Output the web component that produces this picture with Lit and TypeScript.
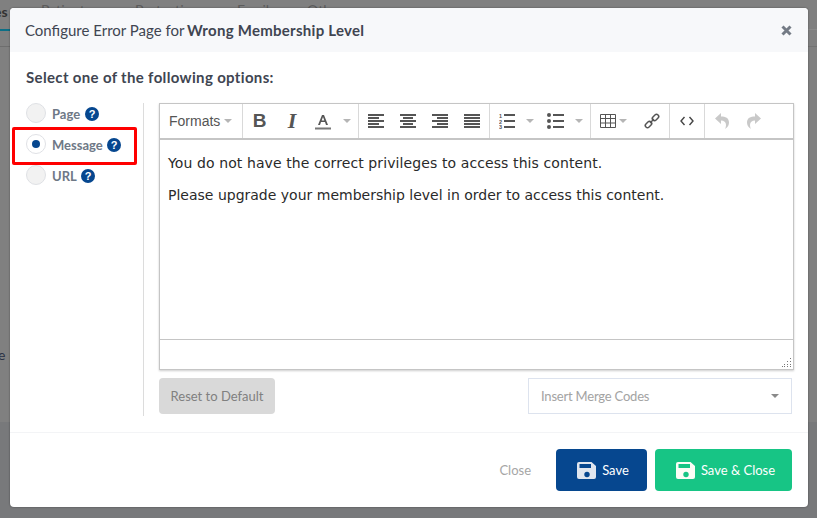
import { LitElement, html, css, svg } from "lit";
import { customElement } from "lit/decorators.js";

const help = html`<svg class="help" viewBox="0 0 14 14" width="14" height="14"><circle cx="7" cy="7" r="7" fill="#06478f"/><text x="7" y="11" text-anchor="middle" font-family="Liberation Sans" font-weight="700" font-size="11" fill="#fff">?</text></svg>`;
const caret = html`<span class="caret"></span>`;
const alignIcon = (lines: [number, number][]) => html`<svg width="16" height="14" viewBox="0 0 16 14">${lines.map(([x, w], i) => svg`<rect x="${x}" y="${i * 3}" width="${w}" height="2" fill="#555"/>`)}</svg>`;
const floppy = (fg: string, hole: string) => html`<svg width="19" height="17" viewBox="0 0 19 17"><path d="M2 0h12.500L19 4V15a2 2 0 0 1-2 2H2a2 2 0 0 1-2-2V2a2 2 0 0 1 2-2z" fill="${fg}"/><rect x="2.500" y="2" width="11.500" height="4" fill="${hole}"/><circle cx="10" cy="12.500" r="2.700" fill="${hole}"/></svg>`;

@customElement("app-root")
export class AppRoot extends LitElement {
  static styles = css`
    :host { display: block; width: 817px; height: 518px; position: relative; overflow: hidden; background: #7f7f7f; font-family: "Lato", sans-serif; color: #404551; }
    .backdrop { position: absolute; inset: 0; display: flex; flex-direction: column; background: #808080; }
    .bg-top { height: 422px; background: #808080; position: relative; }
    .bg-bottom { flex: 1; background: #78797b; }
    .bgtext { position: absolute; font-size: 14px; line-height: 18px; color: #5c5c5c; white-space: nowrap; }
    .t1 { left: -6px; top: 3px; font-weight: 700; color: #333; }
    .t2 { left: 41px; top: 1px; } .t3 { left: 135px; top: 1px; } .t4 { left: 237px; top: 1px; } .t5 { left: 307px; top: 1px; }
    .t6 { left: -2px; top: 346px; color: #2b3245; word-spacing: .5px; }
    .tabline { position: absolute; left: 0; top: 29px; width: 10px; height: 2px; background: #0c6f86; }
    .rule { position: absolute; left: 0; top: 46px; width: 10px; height: 1px; background: #6e6e6e; }
    .bar-r { position: absolute; right: 0; top: 29px; width: 9px; height: 18px; border-top: 1px solid #8a8a8a; border-bottom: 1px solid #737373; box-sizing: border-box; }
    .modal { position: absolute; left: 10px; top: 8px; width: 798px; height: 499px; background: #fff; border-radius: 4px; display: flex; flex-direction: column; box-shadow: 0 0 2px rgba(0,0,0,.45); }
    .head { height: 44px; background: #f7f8fa; border-radius: 4px 4px 0 0; display: flex; align-items: center; justify-content: space-between; padding: 0 16px 0 15px; font-size: 15px; flex: none; }
    .head b { font-weight: 700; letter-spacing: .27px; margin-left: -1px; }
    .body { flex: 1; padding: 14px 16px 0 16px; display: flex; flex-direction: column; border-bottom: 1px solid #f3f4f6; }
    .lead { font-size: 15px; font-weight: 700; line-height: 22px; margin-bottom: 15px; letter-spacing: .34px; }
    .cols { display: flex; }
    .opts { width: 118px; border-right: 1px solid #dcdcdc; height: 313px; flex: none; display: flex; flex-direction: column; gap: 9px; box-sizing: border-box; }
    .opt { height: 22px; display: flex; align-items: center; gap: 6px; font-size: 13px; font-weight: 700; color: #6e7886; position: relative; }
    .radio { width: 20px; height: 20px; border: 1px solid #dfe1e5; border-radius: 50%; background: #f2f2f2; box-sizing: border-box; display: flex; align-items: center; justify-content: center; margin-bottom: 2px; flex: none; }
    .radio.on { background: #fff; }
    .radio.on::after { content: ""; width: 8px; height: 8px; border-radius: 50%; background: #06478f; }
    .help { flex: none; margin-left: -2px; }
    .opt:first-child .help { margin-left: -1px; }
    .mark { position: absolute; left: -14px; top: -7px; width: 125px; height: 38px; border: 3px solid #f00; border-radius: 2px; box-sizing: border-box; pointer-events: none; }
    .main { margin-left: 15px; width: 635px; flex: none; }
    .editor { border: 1px solid #c5c5c5; box-shadow: 0 1px 2px rgba(0,0,0,.2); box-sizing: border-box; height: 267px; display: flex; flex-direction: column; }
    .tb { height: 34px; border-bottom: 2px solid #c5c5c5; box-sizing: content-box; display: flex; flex: none; background: #fff; }
    .grp { display: flex; align-items: center; border-right: 1px solid #d9d9d9; height: 100%; box-sizing: border-box; flex: none; }
    .grp:last-child { border-right: 0; }
    .formats { width: 83px; padding-left: 9px; font: 14px "Liberation Sans", sans-serif; color: #555; gap: 4px; }
    .btn { display: flex; align-items: center; justify-content: center; flex: none; height: 100%; }
    .caret { width: 0; height: 0; border-left: 4px solid transparent; border-right: 4px solid transparent; border-top: 4px solid #b5b5b5; flex: none; }
    .bold { font: 700 19px "Liberation Sans", sans-serif; color: #555; }
    .ital { font: italic 700 22px "Liberation Serif", serif; color: #555; }
    .content { flex: 1; padding: 14px 8px 0; font: 14px/19px "DejaVu Sans", sans-serif; color: #2a2a2a; }
    .content p { margin: 0 0 13px; }
    .p1 { letter-spacing: 0.1px; }
    .status { height: 29px; border-top: 1px solid #c5c5c5; flex: none; position: relative; }
    .grip { position: absolute; right: 1px; bottom: 1px; }
    .under { display: flex; justify-content: space-between; margin-top: 8px; padding-right: 2px; }
    .reset { width: 116px; height: 36px; background: #d9d9d9; border-radius: 4px; color: #808080; font-size: 13px; display: flex; align-items: center; justify-content: center; padding-bottom: 1px; box-sizing: border-box; }
    .merge { width: 264px; height: 36px; border: 1px solid #dde3ee; box-sizing: border-box; display: flex; align-items: center; justify-content: space-between; padding: 0 12px 1px; color: #a3a3a3; font-size: 13px; letter-spacing: -.2px; }
    .merge .caret { border-top-color: #8a8a8a; }
    .foot { height: 74px; flex: none; display: flex; align-items: center; justify-content: flex-end; padding: 0 16px 0 0; gap: 8px; font-size: 13px; }
    .close { color: #a6a6a6; margin-right: 17px; }
    .b { height: 42px; border-radius: 4px; color: #fff; display: flex; align-items: center; justify-content: center; gap: 6px; box-sizing: border-box; }
    .save { width: 91px; background: #06478f; padding-left: 3px; }
    .sc { width: 137px; background: #17c585; padding-left: 4px; }
    .m-a { margin-left: 11px; } .m-b { margin-left: 13px; } .m-c { margin-left: 3px; } .m-d { margin-left: 17px; } .m-e { margin-left: 5px; }
    .w-a { width: 116px; } .w-b { width: 131px; padding-left: 9px; gap: 16px; } .w-c { width: 101px; padding-left: 9px; }
    .w-d { width: 79px; padding-left: 9px; } .w-e { width: 35px; justify-content: center; } .w-f { padding-left: 10px; gap: 18px; }
  `;
  render() {
    const bar = (w: number, c: any) => html`<div class="btn" style="width:${w}px">${c}</div>`;
    const num = (y: number, t: string) => svg`<text x="0" y="${y}" font-size="5.500" font-family="Liberation Sans" fill="#555" font-weight="700">${t}</text>`;
    return html`
      <div class="backdrop">
        <div class="bg-top">
          <span class="bgtext t1">es</span><span class="bgtext t2">Patients</span><span class="bgtext t3">Protections</span><span class="bgtext t4">Family</span><span class="bgtext t5">Other</span>
          <span class="bgtext t6">e p</span><div class="tabline"></div><div class="rule"></div><div class="bar-r"></div>
        </div>
        <div class="bg-bottom"></div>
      </div>
      <div class="modal">
        <div class="head"><span>Configure Error Page for <b>Wrong Membership Level</b></span>
          <svg width="11" height="11" viewBox="0 0 11 11"><path d="M1.500 1.500l8 8M9.500 1.500l-8 8" stroke="#747b85" stroke-width="3" fill="none"/></svg>
        </div>
        <div class="body">
          <div class="lead">Select one of the following options:</div>
          <div class="cols">
            <div class="opts">
              <div class="opt"><span class="radio"></span>Page ${help}</div>
              <div class="opt"><span class="radio on"></span>Message ${help}<span class="mark"></span></div>
              <div class="opt"><span class="radio"></span>URL ${help}</div>
            </div>
            <div class="main">
              <div class="editor">
                <div class="tb">
                  <div class="grp formats">Formats ${caret}</div>
                  <div class="grp w-a">
                    ${bar(33, html`<span class="bold">B</span>`)}
                    ${bar(32, html`<span class="ital">I</span>`)}
                    ${bar(30, html`<svg width="16" height="17" viewBox="0 0 16 17"><path d="M3 12 7 2h2l4 10h-2l-1-3H6l-1 3zM6.700 7.500h2.600L8 4z" fill="#555"/><rect y="14.500" width="16" height="2" fill="#777"/></svg>`)}
                    <span class="caret m-e"></span>
                  </div>
                  <div class="grp w-b">
                    ${alignIcon([[0,16],[0,11],[0,16],[0,11],[0,16]])}
                    ${alignIcon([[0,16],[3,10],[0,16],[3,10],[0,16]])}
                    ${alignIcon([[0,16],[5,11],[0,16],[5,11],[0,16]])}
                    ${alignIcon([[0,16],[0,16],[0,16],[0,16],[0,16]])}
                  </div>
                  <div class="grp w-c">
                    <svg width="16" height="16" viewBox="0 0 16 16"><g fill="#555"><rect x="5" y="1" width="11" height="2"/><rect x="5" y="7" width="11" height="2"/><rect x="5" y="13" width="11" height="2"/></g>${num(5, "1")}${num(10.5, "2")}${num(16, "3")}</svg>
                    <span class="caret m-a"></span>
                    <svg class="m-b" width="17" height="16" viewBox="0 0 17 16"><g fill="#555"><circle cx="2" cy="2" r="2"/><circle cx="2" cy="8" r="2"/><circle cx="2" cy="14" r="2"/><rect x="6" y="1" width="11" height="2"/><rect x="6" y="7" width="11" height="2"/><rect x="6" y="13" width="11" height="2"/></g></svg>
                    <span class="caret m-a"></span>
                  </div>
                  <div class="grp w-d">
                    <svg width="16" height="14" viewBox="0 0 16 14"><path d="M.5.5h15v13H.5zM.5 4.500h15M.5 9h15M5.500.5v13M10.500.5v13" fill="none" stroke="#555"/></svg>
                    <span class="caret m-c"></span>
                    <svg class="m-d" width="16" height="16" viewBox="0 0 16 16"><g fill="none" stroke="#555" stroke-width="1.500"><rect x="-3.600" y="-2.200" width="7.200" height="4.400" rx="2.200" transform="translate(4.500 11.500) rotate(-45)"/><rect x="-3.600" y="-2.200" width="7.200" height="4.400" rx="2.200" transform="translate(11.500 4.500) rotate(-45)"/><path d="M6 10l4-4"/></g></svg>
                  </div>
                  <div class="grp w-e">
                    <svg width="14" height="10" viewBox="0 0 14 10"><path d="M4.500 1 1 5l3.500 4M9.500 1 13 5l-3.500 4" fill="none" stroke="#444" stroke-width="1.400"/></svg>
                  </div>
                  <div class="grp w-f">
                    <svg width="14" height="16" viewBox="0 0 14 16"><path d="M6 0 0 5.500 6 11V7.500c3 0 5 1.500 5 4.500 0 1.500-.5 3-1 4 3-2 4-4 4-6.500C14 5 10.500 3.500 6 3.500z" fill="#c9c9c9"/></svg>
                    <svg width="14" height="16" viewBox="0 0 14 16"><path d="M8 0l6 5.500L8 11V7.500c-3 0-5 1.500-5 4.500 0 1.500.5 3 1 4-3-2-4-4-4-6.500C0 5 3.500 3.500 8 3.500z" fill="#c9c9c9"/></svg>
                  </div>
                </div>
                <div class="content">
                  <p class="p1">You do not have the correct privileges to access this content.</p>
                  <p>Please upgrade your membership level in order to access this content.</p>
                </div>
                <div class="status"><svg class="grip" width="10" height="10" viewBox="0 0 10 10"><g fill="#777"><rect x="8" y="0" width="1" height="1"/><rect x="8" y="3" width="1" height="1"/><rect x="5" y="3" width="1" height="1"/><rect x="8" y="6" width="1" height="1"/><rect x="5" y="6" width="1" height="1"/><rect x="2" y="6" width="1" height="1"/><rect x="8" y="8" width="1" height="1"/><rect x="5" y="8" width="1" height="1"/><rect x="2" y="8" width="1" height="1"/><rect x="0" y="8" width="1" height="1"/></g></svg></div>
              </div>
              <div class="under">
                <div class="reset">Reset to Default</div>
                <div class="merge"><span>Insert Merge Codes</span>${caret}</div>
              </div>
            </div>
          </div>
        </div>
        <div class="foot">
          <span class="close">Close</span>
          <div class="b save">${floppy("#e0e6ef", "#06478f")}Save</div>
          <div class="b sc">${floppy("#fbfdf6", "#17c585")}Save &amp; Close</div>
        </div>
      </div>
    `;
  }
}
